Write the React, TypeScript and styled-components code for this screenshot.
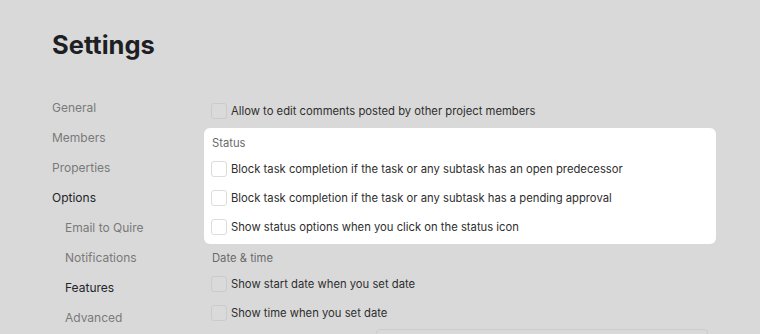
import React from "react";
import styled, { createGlobalStyle } from "styled-components";

const Global = createGlobalStyle`
  html, body { margin: 0; padding: 0; background: #d9d9d9; }
  body { font-family: Inter, "Noto Sans", sans-serif; -webkit-font-smoothing: antialiased; }
`;

const Page = styled.div`
  width: 760px;
  height: 334px;
  overflow: hidden;
  padding: 29px 0 0 52px;
  box-sizing: border-box;
`;

const Title = styled.h1`
  margin: 0;
  font-size: 25.5px;
  line-height: 32px;
  font-weight: 700;
  color: #1d1f24;
`;

const Body = styled.div`
  display: flex;
  margin-top: 31px;
`;

const Nav = styled.nav`
  width: 152px;
  padding-top: 1px;
  display: flex;
  flex-direction: column;
`;

const NavItem = styled.div<{ $sub?: boolean; $active?: boolean }>`
  height: 30px;
  line-height: 30px;
  font-size: 12px;
  padding-left: ${(p) => (p.$sub ? 13 : 0)}px;
  color: ${(p) => (p.$active ? "#23252a" : "#7a7a7a")};
`;

const Content = styled.div`
  width: 512px;
  padding-top: 4px;
  display: flex;
  flex-direction: column;
`;

const Card = styled.div`
  background: #ffffff;
  border-radius: 6px;
  padding: 4px 0 3px;
  margin-top: 3px;
`;

const Label = styled.div<{ $gap?: number }>`
  height: 22px;
  line-height: 22px;
  font-size: 11.25px;
  color: #6a6a6a;
  padding-left: 8px;
  margin-top: ${(p) => p.$gap ?? 0}px;
`;

const Row = styled.label`
  height: 29px;
  display: flex;
  align-items: center;
  gap: 4px;
  padding-left: 7px;
  font-size: 11.25px;
  color: #2e2e2e;
`;

const Box = styled.span<{ $onWhite?: boolean }>`
  width: 14px;
  height: 14px;
  border-radius: 3px;
  border: 1px solid ${(p) => (p.$onWhite ? "#dcdcdc" : "#cbcbcb")};
  background: ${(p) => (p.$onWhite ? "#ffffff" : "#dadada")};
  flex-shrink: 0;
`;

const Field = styled.div`
  margin: 2px 0 0 172px;
  width: 330px;
  height: 20px;
  border: 1px solid #cdcdcd;
  border-radius: 4px;
`;

function Check({ text, onWhite }: { text: string; onWhite?: boolean }) {
  return (
    <Row>
      <Box $onWhite={onWhite} />
      <span>{text}</span>
    </Row>
  );
}

export default function App() {
  return (
    <>
      <Global />
      <Page>
        <Title>Settings</Title>
        <Body>
          <Nav>
            <NavItem>General</NavItem>
            <NavItem>Members</NavItem>
            <NavItem>Properties</NavItem>
            <NavItem $active>Options</NavItem>
            <NavItem $sub>Email to Quire</NavItem>
            <NavItem $sub>Notifications</NavItem>
            <NavItem $sub $active>Features</NavItem>
            <NavItem $sub>Advanced</NavItem>
          </Nav>
          <Content>
            <Check text="Allow to edit comments posted by other project members" />
            <Card>
              <Label>Status</Label>
              <Check onWhite text="Block task completion if the task or any subtask has an open predecessor" />
              <Check onWhite text="Block task completion if the task or any subtask has a pending approval" />
              <Check onWhite text="Show status options when you click on the status icon" />
            </Card>
            <Label $gap={3}>Date &amp; time</Label>
            <Check text="Show start date when you set date" />
            <Check text="Show time when you set date" />
            <Field />
          </Content>
        </Body>
      </Page>
    </>
  );
}
